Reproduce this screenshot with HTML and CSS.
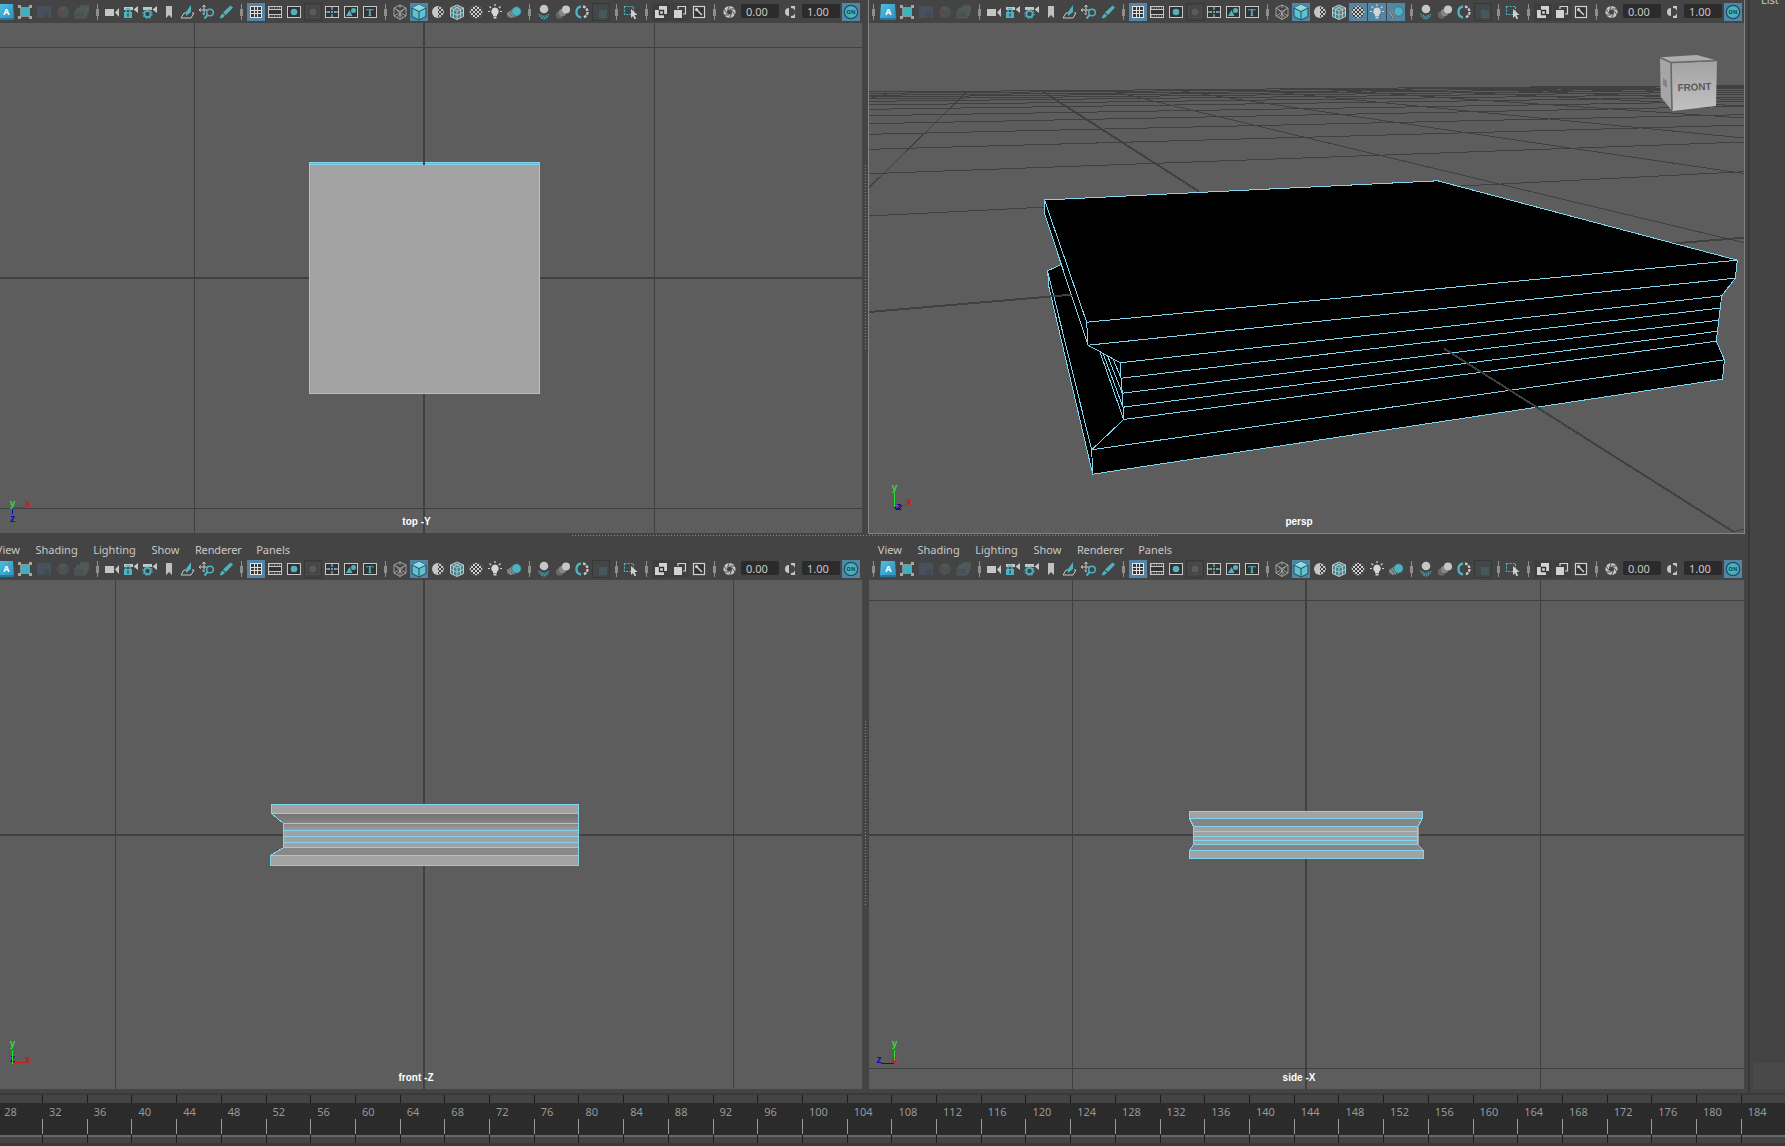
FILE: index.html
```html
<!DOCTYPE html>
<html lang="en">
<head>
<meta charset="utf-8">
<title>Four View</title>
<link rel="stylesheet" href="styles.css">
</head>
<body>
<svg class="defs" aria-hidden="true">
  <defs>
    <linearGradient id="gA" x1="0" y1="0" x2="1" y2="1"><stop offset="0" stop-color="#4fc0de"/><stop offset="1" stop-color="#2b8fc0"/></linearGradient>
    <linearGradient id="gFace" x1="0" y1="0" x2="0" y2="1"><stop offset="0" stop-color="#a2a2a2"/><stop offset="1" stop-color="#c2c2c2"/></linearGradient>
    <linearGradient id="gUnder" x1="0" y1="0" x2="0" y2="1"><stop offset="0" stop-color="#727272"/><stop offset="1" stop-color="#858585"/></linearGradient>
    <linearGradient id="gPage" x1="0" y1="0" x2="0" y2="1"><stop offset="0" stop-color="#858585"/><stop offset=".3" stop-color="#a0a0a0"/><stop offset="1" stop-color="#9fa3a5"/></linearGradient>
    <pattern id="chk" width="4" height="4" patternUnits="userSpaceOnUse"><path d="M0 0h2v2H0zM2 2h2v2H2z" fill="#3a3a3a"/></pattern>
  </defs>
  <symbol id="i-a" viewBox="0 0 18 18"><path d="M2 1h14l1 15-2 1H2L1 15z" fill="url(#gA)"/><path d="M1 15l1 2h13l2-1v-1z" fill="#2377a0"/><text x="9.3" y="11.8" class="a-letter">A</text></symbol>
  <symbol id="i-sel" viewBox="0 0 18 18"><rect x="4.5" y="4.5" width="9" height="9" fill="#3fb0c0" stroke="#8f8f8f"/><path d="M2 2h3v3H2zM13 2h3v3h-3zM2 13h3v3H2zM13 13h3v3h-3z" fill="#a8a8a8"/></symbol>
  <symbol id="i-dim1" viewBox="0 0 18 18"><path d="M2 3h14v12H2z" fill="#48505a"/><path d="M2 3h9v5H7v7H2z" fill="#465060"/><path d="M9 9h5v6H9z" fill="#444a55"/></symbol>
  <symbol id="i-dim2" viewBox="0 0 18 18"><circle cx="9" cy="9" r="6" fill="#4c5254"/><path d="M9 9L5 13A6 6 0 0 1 5 5z" fill="#584a50"/><path d="M9 9L5 5a6 6 0 0 1 8 0z" fill="#4e5952"/></symbol>
  <symbol id="i-dim3" viewBox="0 0 18 18"><path d="M7 2h9v8H7z" fill="#505650"/><path d="M4 5h10v8H4z" fill="#4c5557" stroke="#5c625e" stroke-width=".7"/><path d="M2 8h10v7H2z" fill="#475358" stroke="#5c625e" stroke-width=".7"/></symbol>
  <symbol id="i-cam" viewBox="0 0 18 18"><path d="M2 6h9v7H2zM12 9.500L16 5v9z" fill="#c6c6c6"/></symbol>
  <symbol id="i-camlock" viewBox="0 0 18 18"><path d="M2 4h9v3H2zM11.500 6.500L16 3v7z" fill="#c6c6c6"/><path d="M4 9V7.500a2 2 0 0 1 4 0V9" fill="none" stroke="#4fb3bf" stroke-width="1.500"/><path d="M2 9h8v6H2z" fill="#4fb3bf"/><path d="M5.300 10.500h1.400v3H5.300z" fill="#444"/></symbol>
  <symbol id="i-camgear" viewBox="0 0 18 18"><path d="M2 4h9v3H2zM11.500 6.500L16 3v7z" fill="#c6c6c6"/><circle cx="6.500" cy="11" r="3.200" fill="#444" stroke="#4fb3bf" stroke-width="1.800"/><circle cx="6.500" cy="11" r="4.700" fill="none" stroke="#4fb3bf" stroke-dasharray="1.700 2"/></symbol>
  <symbol id="i-mark" viewBox="0 0 18 18"><path d="M6 3h6v12l-3-3-3 3z" fill="#c0c0c0"/></symbol>
  <symbol id="i-plane" viewBox="0 0 18 18"><path d="M7 10H5l-3 5h10l3-5h-2" fill="none" stroke="#c6c6c6"/><path d="M7 9l5-7v7l-5 4z" fill="#4fb3bf"/></symbol>
  <symbol id="i-pan" viewBox="0 0 18 18"><path d="M6 2v10M1 7h9M4.500 4L6 2l1.500 2M3 5.500L1 7l2 1.500M4.500 10.500L6 12" fill="none" stroke="#c6c6c6"/><circle cx="12" cy="9.500" r="3.300" fill="#444" stroke="#4fb3bf" stroke-width="1.500"/><path d="M9.500 12L6.500 15.500" stroke="#4fb3bf" stroke-width="2"/></symbol>
  <symbol id="i-pen" viewBox="0 0 18 18"><path d="M13.500 2.500l2.500 2L9 12 6 9.500z" fill="#4fb3bf"/><path d="M5.500 10.500l2.500 2c-1 2-3.500 3-5 3 0-2 1-4 2.500-5z" fill="#4fb3bf"/></symbol>
  <symbol id="i-grid" viewBox="0 0 18 18"><rect x="3.500" y="3.500" width="11" height="11" fill="#383838" stroke="#e2e2e2"/><path d="M3 7.500h12M3 10.500h12M7.500 3v12M10.500 3v12" stroke="#e2e2e2"/></symbol>
  <symbol id="i-film" viewBox="0 0 18 18"><rect x="2.500" y="3.500" width="13" height="11" fill="#333" stroke="#c6c6c6"/><path d="M3 6.500h12M3 11.500h12" stroke="#c6c6c6"/><path d="M3 5h12M3 13h12" stroke="#c6c6c6" stroke-dasharray="1 1.500"/></symbol>
  <symbol id="i-gate" viewBox="0 0 18 18"><rect x="2.500" y="3.500" width="13" height="11" fill="#333" stroke="#c6c6c6"/><circle cx="9" cy="9" r="3.300" fill="#4fb3bf"/></symbol>
  <symbol id="i-gateoff" viewBox="0 0 18 18"><rect x=".5" y=".5" width="17" height="17" fill="#434343" stroke="#383838"/><rect x="2.500" y="3.500" width="13" height="11" fill="#454545" stroke="#4c4c4c"/><circle cx="9" cy="9" r="3.500" fill="#5a5a5a"/></symbol>
  <symbol id="i-chart" viewBox="0 0 18 18"><rect x="2.500" y="3.500" width="13" height="11" fill="#333" stroke="#c6c6c6"/><path d="M9 4v3M9 11v3M3 9h3M12 9h3" stroke="#c6c6c6"/><path d="M5 9h8" stroke="#4fb3bf" stroke-width="2" stroke-dasharray="2 1"/></symbol>
  <symbol id="i-safe" viewBox="0 0 18 18"><rect x="2.500" y="3.500" width="13" height="11" fill="#333" stroke="#c6c6c6"/><path d="M4 13l3.500-6 3 6z" fill="#4fb3bf"/><circle cx="11.500" cy="7.500" r="2.500" fill="#4fb3bf"/></symbol>
  <symbol id="i-text" viewBox="0 0 18 18"><rect x="2.500" y="3.500" width="13" height="11" fill="#333" stroke="#c6c6c6"/><text x="9" y="13" class="t-letter">T</text></symbol>
  <symbol id="i-wire" viewBox="0 0 18 18"><path d="M9 2l6 3v8l-6 3.500L3 13V5zM3 5l6 3.500L15 5M9 8.500v8M9 2v3M3 13l4-2.500M15 13l-4-2.500M5.500 6.500L12 14.500M12.500 6.500L6 14.500" fill="none" stroke="#b8b8b8" stroke-width=".8"/></symbol>
  <symbol id="i-cube" viewBox="0 0 18 18"><path d="M9 1.500l7 3.500v8.500l-7 3.500-7-3.500V5z" fill="#5cc3cf" stroke="#264a57"/><path d="M2 5l7 3.500L16 5 9 1.500z" fill="#8adbe3"/><path d="M2 5l7 3.500L16 5M9 8.500V17" fill="none" stroke="#264a57"/></symbol>
  <symbol id="i-half" viewBox="0 0 18 18"><circle cx="9" cy="9" r="6" fill="#c6c6c6"/><path d="M9 3a6 6 0 0 1 0 12z" fill="url(#chk)"/></symbol>
  <symbol id="i-texcube" viewBox="0 0 18 18"><path d="M9 2l6.500 3v8.500L9 16.500l-6.500-3V5z" fill="#3b8791" stroke="#c6c6c6"/><path d="M2.500 5L9 8l6.500-3M9 8v8.500M6 3.400l6.500 3v8.500M12 3.400l-6.500 3v8.500M2.500 9.300L9 12.300l6.500-3" fill="none" stroke="#c6c6c6" stroke-width=".9"/></symbol>
  <symbol id="i-check" viewBox="0 0 18 18"><circle cx="9" cy="9" r="6.300" fill="#d0d0d0"/><circle cx="9" cy="9" r="6.300" fill="url(#chk)"/></symbol>
  <symbol id="i-bulb" viewBox="0 0 18 18"><path d="M9 4.500a4 4 0 0 1 2 7.300V13H7v-1.200a4 4 0 0 1 2-7.300zM7.500 13.500h3v2h-3z" fill="#d6d6d6"/><path d="M9 1v2M2 8.500h2M14 8.500h2M3.500 3.500L5 5M14.500 3.500L13 5" stroke="#d6d6d6" stroke-width="1.200"/></symbol>
  <symbol id="i-shadow" viewBox="0 0 18 18"><path d="M8 6L2 10v3l3 2 6-1z" fill="#8c9a9d"/><path d="M4 9l4 6M2 11l3 4M6 8l4 6" stroke="#444" stroke-width=".8"/><circle cx="11.500" cy="8.500" r="4.700" fill="#4fb3bf" stroke="#3c5c66" stroke-width=".6"/></symbol>
  <symbol id="i-ao" viewBox="0 0 18 18"><circle cx="9" cy="6" r="4.300" fill="#c6c6c6"/><path d="M3 11l6 2.500 6-2.500M4 13l5 2 5-2M6 15l3 1 3-1" fill="none" stroke="#3f9aa5" stroke-width="1.300" stroke-dasharray="1.800 .8"/></symbol>
  <symbol id="i-blur" viewBox="0 0 18 18"><circle cx="5.500" cy="12" r="3.700" fill="#676767"/><circle cx="8.500" cy="9.500" r="3.700" fill="#868686"/><circle cx="12" cy="6.500" r="4" fill="#c6c6c6"/></symbol>
  <symbol id="i-aa" viewBox="0 0 18 18"><path d="M8 3.500a5.600 5.600 0 0 0 0 11" fill="none" stroke="#4fb3bf" stroke-width="2.300"/><path d="M10 3.500a5.600 5.600 0 0 1 0 11" fill="none" stroke="#c6c6c6" stroke-width="2.300" stroke-dasharray="2.800 1"/></symbol>
  <symbol id="i-dofoff" viewBox="0 0 18 18"><rect x=".5" y=".5" width="17" height="17" fill="#434748" stroke="#373737"/><path d="M3 4h8v7H3z" fill="#41494b"/><path d="M7 7h8v8H7z" fill="#45595c"/></symbol>
  <symbol id="i-iso" viewBox="0 0 18 18"><rect x="2.500" y="3.500" width="9" height="8" fill="none" stroke="#4fb3bf" stroke-width="1.200" stroke-dasharray="2 1.200"/><path d="M9 6l6.500 6h-3l1.700 3.500-1.700.8L11 13l-2 2z" fill="#d0d0d0"/></symbol>
  <symbol id="i-xray1" viewBox="0 0 18 18"><path d="M0 0h18v18H0z" fill="#3e3e3e"/><path d="M7 3h8v8h-3v4H3V7h4z" fill="#d2d2d2"/><path d="M7.500 7.500h4v4h-4z" fill="#d2d2d2" stroke="#303030" stroke-width="1.300"/></symbol>
  <symbol id="i-xray2" viewBox="0 0 18 18"><path d="M0 0h18v18H0z" fill="#3f3f3f"/><path d="M7 6V3.500h7.500V11H12" fill="none" stroke="#d2d2d2" stroke-width="1.200"/><path d="M3 7h8v8H3z" fill="#d2d2d2"/></symbol>
  <symbol id="i-xray3" viewBox="0 0 18 18"><rect x="3.500" y="3.500" width="11" height="11" fill="#333" stroke="#d2d2d2" stroke-width="1.200"/><path d="M7 7l5 5" stroke="#d2d2d2" stroke-width="1.500"/><circle cx="6.600" cy="6.600" r="1.600" fill="#d2d2d2"/></symbol>
  <symbol id="i-exp" viewBox="0 0 18 18"><circle cx="9.500" cy="9" r="4.300" fill="none" stroke="#c6c6c6" stroke-width="3.600"/><path d="M9.500 2.500l-2 5M15.500 6l-5.500 0M15 12l-3-4.500M9.500 15.500l2-5M3.500 12l5.500 0M4 6l3 4.500" stroke="#444" stroke-width=".9"/></symbol>
  <symbol id="i-gam" viewBox="0 0 18 18"><path d="M10 3h4v12h-4v-2a4 4 0 0 0 0-8z" fill="#c6c6c6"/><path d="M8 5v8a4 4 0 0 1 0-8z" fill="#c6c6c6"/></symbol>
  <symbol id="i-on" viewBox="0 0 18 18"><circle cx="9" cy="9" r="6.700" fill="#49b0bb" stroke="#1e4e5e" stroke-width="1.200"/><text x="9" y="11.200" class="on-letter">ON</text></symbol>
</svg>

<main class="app">
  <div class="workspace">
    <div class="panes">
      <section class="pane">
        <div class="toolbar"></div>
        <svg class="view" viewBox="0 23 862 510">
          <g class="grid"><path d="M0 47.500H862M0 508.500H862M194.500 23V533M654.500 23V533"/><path class="axis" d="M0 278H862M424 23V533"/></g>
          <g class="wire"><rect x="309.500" y="162.500" width="230" height="231" fill="#a2a2a2"/><path d="M309 164.500H540"/></g>
          <g class="grid"><path class="axis" d="M424 162V165"/></g>
          <g class="tri"><path class="r" d="M13 507.500H26"/><path class="b" d="M12.500 508V514"/><text class="ty" x="12.500" y="507">y</text><text class="tx" x="28" y="507">x</text><text class="tz" x="12.500" y="522">z</text></g>
          <text class="name" x="416.500" y="524.500">top -Y</text>
        </svg>
      </section>

      <section class="pane persp">
        <div class="toolbar" data-lit></div>
        <svg class="view" viewBox="869 23 875 510">
          <g class="grid">
            <path d="M869 216L1744 171.700M869 173.700L1744 142M869 149.300L1744 125.100M869 134.300L1744 114.600M869 123.700L1744 106.300M869 115.700L1744 101.500M869 109.300L1744 97M869 105L1744 94M869 101.300L1744 92M869 99L1744 90M869 97L1744 88.300M869 95.300L1744 87.300M869 93.300L1744 86.300M869 92L1744 85.400"/>
            <path d="M966.700 92L869 187.500M890 93L869 99M1111.700 91L1744 242.700M1175 90L1744 173.500M1248 89.500L1744 138M1310 88.500L1744 118M1370 88L1744 106M1430 87.500L1744 100M1500 87L1744 95"/>
            <path class="axis" d="M1041 90.300L1199.300 191.700M1660 244.500L1744 237.700"/>
          </g>
          <g class="wire">
            <path fill="#000" d="M1061.500 264.500L1047.500 270.800L1049 287.500L1092.700 474.200L1722.500 379.200L1724.500 359.800L1716.300 341.200L1721.700 295.800L1735.300 278.200L1737.300 260.200L1437.700 180.800L1044.500 200V213.500z"/>
            <path d="M1044.500 200L1086.700 322.200L1737.300 260.200M1086.700 322.200L1088 345.200L1735.300 278.200M1044.500 213.500L1088 345.200L1120.300 362.800L1721.700 295.800M1120.300 362.800L1121 378.200L1122.300 393.200L1123 407.200L1123.700 419.500L1091.700 449.800L1092.700 474.200M1121 378.200L1720.300 308M1122.300 393.200L1718.300 320.200M1123 407.200L1717.700 331.200M1123.700 419.500L1716.300 341.200M1091.700 449.800L1724.500 359.800M1047.500 270.800L1091.700 449.800"/>
            <path d="M1099.700 351.200L1123.700 419.500M1103 353.200L1123 407.200M1107.700 356.200L1122.300 393.200M1113.300 359.500L1121 378.200"/>
          </g>
          <g class="grid"><path class="axis" d="M869 312L1071.500 294.700M1444.300 348.700L1733.300 531.700"/><path d="M1733 531.700L1744 529"/></g>
          <g class="viewcube">
            <path d="M1660 57.300L1697 55L1716.700 60.500L1671 63.300z" fill="#adadad"/>
            <path d="M1660 57.300L1671 63.300L1672.300 111L1660.700 96.700z" fill="#a6a6a6"/>
            <path d="M1671 63.300L1717 61L1716 106L1672.300 111z" fill="url(#gFace)"/>
            <path d="M1660 57.500L1671 62.500L1717 60.500M1671 63L1672 110" fill="none" stroke="#686868" stroke-width="1.600"/>
            <path d="M1663 78l4 3v7l-4-3z" fill="#858585"/>
            <text class="cube-text" x="1694.500" y="90.500" transform="rotate(-3 1694 87)" textLength="34" lengthAdjust="spacingAndGlyphs">FRONT</text>
          </g>
          <g class="tri"><path class="g" d="M894.500 493V508"/><path class="r" d="M895 507.500L906 505"/><path class="b" d="M894 507L898 510L902 506"/><text class="ty" x="894.500" y="491">y</text><text class="tx" x="909" y="505">x</text><text class="tz" x="899" y="510">z</text></g>
          <text class="name" x="1299" y="524.500">persp</text>
        </svg>
      </section>

      <section class="pane">
        <nav class="menu"><span>View</span><span>Shading</span><span>Lighting</span><span>Show</span><span class="tight">Renderer</span><span>Panels</span></nav>
        <div class="toolbar"></div>
        <svg class="view" viewBox="0 580 862 509">
          <g class="grid"><path d="M115.500 580V1089M733.500 580V1089"/><path class="axis" d="M0 835H862M424 580V1089"/></g>
          <g class="wire">
            <path fill="#a2a2a2" d="M271.500 804.500H578V813.500H271.500zM270.500 855.500H578V865.500H270.500z" stroke="none"/>
            <path fill="url(#gUnder)" d="M271.500 813.500H578V823.500H283.500z" stroke="none"/>
            <path fill="url(#gPage)" d="M283.500 823.500H578V847.500H283.500z" stroke="none"/>
            <path fill="#888" d="M283.500 847.500H578V855.500H270.500z" stroke="none"/>
            <path fill="none" d="M271.500 804.500H578.500V865.500H270.500V855.500L283.500 847.500V823.500L271.500 813.500zM271.500 813.500H578M283.500 823.500H578M283.500 830.500H578M283.500 836.500H578M283.500 842.500H578M283.500 847.500H578M270.500 855.500H578"/>
          </g>
          <g class="tri"><path class="r" d="M13 1062.500H26"/><text class="tz" x="12.500" y="1062">z</text><path class="g" d="M12.500 1050V1064"/><text class="ty" x="12.500" y="1047">y</text><text class="tx" x="28" y="1063">x</text></g>
          <text class="name" x="416" y="1080.500">front -Z</text>
        </svg>
      </section>

      <section class="pane side">
        <nav class="menu"><span>View</span><span>Shading</span><span>Lighting</span><span>Show</span><span class="tight">Renderer</span><span>Panels</span></nav>
        <div class="toolbar"></div>
        <svg class="view" viewBox="869 580 875 509">
          <g class="grid"><path d="M869 600.500H1744M869 1068.500H1744M1072.500 580V1089M1540.500 580V1089"/><path class="axis" d="M869 835H1744M1306 580V1089"/></g>
          <g class="wire">
            <path fill="#a2a2a2" stroke="none" d="M1189.500 811.500H1422.500V818.500L1418.500 826.500V844.500L1423.500 850.500V858.500H1189.500V850.500L1193.500 844.500V826.500L1189.500 818.500z"/>
            <path fill="#858585" stroke="none" d="M1190 818.500H1422L1418.500 826.500H1193.500zM1193.500 844.500H1418.500L1423 850.500H1190z"/>
            <path fill="none" d="M1189.500 811.500H1422.500V818.500L1417.500 826.500V844.500L1423.500 850.500V858.500H1189.500V850.500L1193.500 844.500V826.500L1189.500 818.500zM1189.500 818.500H1422M1193.500 826.500H1418M1193.500 831.500H1418M1193.500 836.500H1418M1193.500 840.500H1418M1193.500 844.500H1418M1189.500 850.500H1423"/>
          </g>
          <g class="tri"><path class="b" d="M881 1063.500H894"/><text class="tx" x="894.500" y="1063">x</text><path class="g" d="M894.500 1050V1060"/><text class="ty" x="894.500" y="1047">y</text><text class="tz" x="879" y="1063">z</text></g>
          <text class="name" x="1299" y="1080.500">side -X</text>
        </svg>
      </section>
      <i class="dots v upper"></i><i class="dots v lower"></i><i class="dots h"></i>
    </div>
    <aside class="dock"><span class="dock-title">List</span><div class="dock-box"></div></aside>
  </div>
  <footer class="timeline"><div class="frames"></div></footer>
</main>

<template id="tools">
  <i class="sep"></i><b data-i="a"></b><b data-i="sel"></b><b data-i="dim1"></b><b data-i="dim2"></b><b data-i="dim3"></b>
  <i class="sep"></i><b data-i="cam"></b><b data-i="camlock"></b><b data-i="camgear"></b><b data-i="mark"></b><b data-i="plane"></b><b data-i="pan"></b><b data-i="pen"></b>
  <i class="sep"></i><b data-i="grid" class="on"></b><b data-i="film"></b><b data-i="gate"></b><b data-i="gateoff"></b><b data-i="chart"></b><b data-i="safe"></b><b data-i="text"></b>
  <i class="sep"></i><b data-i="wire"></b><b data-i="cube" class="on"></b><b data-i="half"></b><b data-i="texcube"></b><b data-i="check" class="lit"></b><b data-i="bulb" class="lit"></b><b data-i="shadow" class="lit"></b>
  <i class="sep"></i><b data-i="ao"></b><b data-i="blur"></b><b data-i="aa"></b><b data-i="dofoff"></b>
  <i class="sep"></i><b data-i="iso"></b>
  <i class="sep"></i><b data-i="xray1"></b><b data-i="xray2"></b><b data-i="xray3"></b>
  <i class="sep"></i><b data-i="exp"></b><span class="field">0.00</span><b data-i="gam"></b><span class="field">1.00</span><b data-i="on" class="on"></b>
</template>
<script src="main.js"></script>
</body>
</html>
```
FILE: styles.css
```css
* { box-sizing: border-box; }
body {
  margin: 0;
  width: 1785px;
  height: 1146px;
  overflow: hidden;
  background: #444;
  color: #c8c8c8;
  font: 11px/1 "Noto Sans", "Open Sans", sans-serif;
}
.defs { position: absolute; width: 0; height: 0; }
.app { display: flex; flex-direction: column; height: 1146px; }
.workspace { display: flex; height: 1093px; }

.panes {
  position: relative;
  display: grid;
  grid-template-columns: 862px 877px;
  grid-template-rows: 534px 555px;
  column-gap: 6px;
  width: 1748px;
}
.pane { display: flex; flex-direction: column; min-width: 0; overflow: hidden; }
.persp { border: solid #858585; border-width: 0 1px 1px; }
.side { padding: 0 1px; }
.view { display: block; flex: none; width: 100%; background: #5d5d5d; height: 510px; }
.menu + .toolbar + .view { height: 509px; }

.menu { display: flex; flex: none; height: 24px; padding: 6px 0 0 2px; margin-left: -14px; align-items: center; white-space: nowrap; }
.menu span { padding: 0 7.800px; }
.menu .tight { letter-spacing: -.15px; margin-right: -1px; }
.side .menu, .side .toolbar, .persp .toolbar { margin-left: -1px; }

.toolbar { display: flex; flex: none; align-items: flex-start; height: 23px; padding-top: 3px; margin-left: -14px; }
.menu + .toolbar { height: 22px; padding-top: 2px; }
.toolbar b { flex: none; width: 18px; height: 18px; margin-right: 1px; }
.toolbar b svg { display: block; width: 18px; height: 18px; }
.toolbar .on, .toolbar[data-lit] .lit { background: #5285a6; }
.sep { flex: none; width: 11px; height: 18px; background: linear-gradient(#8e8e8e, #8e8e8e) 5px 1px / 1px 16px no-repeat, linear-gradient(#8e8e8e, #8e8e8e) 4px 6px / 3px 7px no-repeat; }
.field { flex: none; width: 38px; height: 14px; margin: 1px 2px 0 2px; padding-left: 5px; background: #2b2b2b; border-radius: 2px; line-height: 15px; }
.a-letter { font: bold 9px "Noto Sans", sans-serif; fill: #fff; text-anchor: middle; }
.t-letter { font: bold 11px "Liberation Serif", serif; fill: #4fb3bf; text-anchor: middle; }
.on-letter { font: bold 5.500px "Noto Sans", sans-serif; fill: #17414f; text-anchor: middle; }

.grid, .wire { fill: none; shape-rendering: crispEdges; }
.grid path { stroke: #404040; stroke-width: 1; }
.grid .axis { stroke-width: 2; }
.wire { stroke: #7fd4ee; stroke-width: 1; }
.tri { shape-rendering: crispEdges; font: bold 10px "Liberation Sans", sans-serif; text-anchor: middle; }
.tri path { fill: none; }
.r { stroke: #d01818; }
.g { stroke: #2be02b; }
.b { stroke: #0808c8; }
.tx { fill: #d01818; }
.ty { fill: #2be02b; }
.tz { fill: #0808c8; }
.name { font: bold 10px "Liberation Sans", sans-serif; fill: #fff; text-anchor: middle; }
.cube-text { font: bold 10px "Liberation Sans", sans-serif; fill: #5a5a5a; text-anchor: middle; }

.dots { position: absolute; }
.dots.v { left: 865px; width: 1px; height: 184px; background: repeating-linear-gradient(#888 0 1px, transparent 1px 3px); }
.dots.upper { top: 165px; }
.dots.lower { top: 721px; }
.dots.h { left: 572px; top: 535px; width: 587px; height: 1px; background: repeating-linear-gradient(90deg, #888 0 1px, transparent 1px 3px); }

.dock { display: flex; flex-direction: column; justify-content: space-between; width: 37px; border-left: 2px solid #393939; padding: 0 0 4px 3px; }
.dock-title { margin: -6px 0 0 8px; }
.dock-box { height: 26px; background: #494949; }

.timeline { height: 53px; border: solid #393939; border-width: 2px 0 3px; background: linear-gradient(#444 8px, #2b2b2b 8px 40px, #666 40px 42px, #444 42px); overflow: hidden; }
.frames { display: flex; margin-left: -2.700px; color: #989898; }
.frame { flex: none; width: 44.705px; height: 48px; padding: 11px 0 0 7px; background: linear-gradient(#1c1c1c 8px, transparent 8px 24px, #999 24px 39px, transparent 39px 40px, #1c1c1c 40px) 0 0 / 1px 48px no-repeat; }
```
FILE: main.js
```javascript
const tools = document.getElementById('tools');
document.querySelectorAll('.toolbar').forEach(bar => {
  bar.append(tools.content.cloneNode(true));
  bar.querySelectorAll('b').forEach(b => {
    b.innerHTML = `<svg><use href="#i-${b.dataset.i}"/></svg>`;
  });
});

const frames = document.querySelector('.frames');
for (let n = 28; n <= 184; n += 4) {
  const cell = document.createElement('span');
  cell.className = 'frame';
  cell.textContent = n;
  frames.append(cell);
}
```
